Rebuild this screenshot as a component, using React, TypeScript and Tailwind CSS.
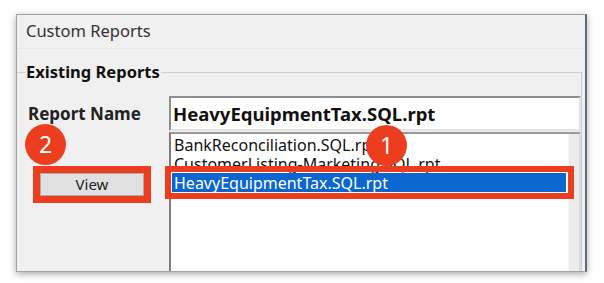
import { FC } from 'react';

const font = "font-['Segoe_UI','Noto_Sans','Open_Sans',sans-serif]";

// Numbered callout bubble laid over the dialog
const Callout: FC<{ n: string; className: string }> = ({ n, className }) => (
  <div
    className={`absolute w-[41px] h-[41px] rounded-full bg-[#ec3e1f] text-white text-[23px] leading-none flex items-center justify-center ${className}`}
  >
    {n}
  </div>
);

const reports = [
  'BankReconciliation.SQL.rpt',
  'CustomerListing-Marketing.SQL.rpt',
  'HeavyEquipmentTax.SQL.rpt',
];

export default function App() {
  const selected = 2;

  return (
    <div className={`w-[604px] h-[283px] bg-white overflow-hidden pt-[14px] pl-[16px] ${font}`}>
      {/* Dialog window */}
      <div className="relative w-[571px] h-[258px] bg-[#f0f0f0] border-t border-l border-b border-[#a3a3a3] border-r-2 border-r-[#5d6d80] shadow-[0_2px_7px_rgba(0,0,0,0.35)] flex flex-col">
        <div className="h-[34px] pl-[9px] flex items-center text-[16.5px] text-[#333] border-b border-[#e7e7e7]">
          Custom Reports
        </div>

        {/* Group box */}
        <fieldset className="mt-[15px] flex-1 min-h-0 border-t border-r border-[#cfcfcf] mr-[3px] flex">
          <legend className="ml-[8px] px-[1px] text-[16.5px] font-bold text-[#111] leading-[16px]">
            Existing Reports
          </legend>
          <div className="flex w-full h-full">
            <div className="w-[152px] shrink-0 flex flex-col">
              <div className="mt-[25px] pl-[11px] text-[17px] font-bold text-[#222] leading-[18px]">
                Report Name
              </div>
              <div className="mt-[50px] ml-[23px]">
                <button className="w-[104px] h-[23px] bg-[#e1e1e1] border border-[#adadad] text-[15px] text-[#222] flex items-center justify-center outline-[7px] outline-solid outline-[#ec3e1f]">
                  View
                </button>
              </div>
            </div>

            <div className="flex-1 flex flex-col">
              <div className="mt-[16px] h-[35px] bg-white border-2 border-t-[#8f8f8f] border-l-[#8f8f8f] border-b-[#e3e3e3] border-r-[#e3e3e3] flex items-center pl-[2px] text-[18.5px] font-bold text-[#111]">
                HeavyEquipmentTax.SQL.rpt
              </div>
              <div className="mt-[1px] flex-1 bg-white border-2 border-t-[#9a9a9a] border-l-[#7d7d7d] border-b-0 border-r-[#dadada] flex">
                <div className="flex-1 pt-[1px] pl-[1px]">
                  {reports.map((r, i) => (
                    <div
                      key={r}
                      className={`relative h-[19px] pl-[2px] flex items-center text-[16px] ${
                        i === selected ? 'bg-[#0b66cf] text-white mr-[2px]' : 'text-[#111]'
                      }`}
                    >
                      {r}
                      {i === selected && (
                        <div className="absolute -left-[7px] -right-[8px] -top-[7px] -bottom-[7px] border-[6px] border-[#ec3e1f]" />
                      )}
                    </div>
                  ))}
                </div>
                <div className="w-[11px] bg-[#ececec] border-l border-[#f8f8f8]" />
              </div>
            </div>
          </div>
        </fieldset>

        <Callout n="2" className="left-[8px] top-[109px]" />
        <Callout n="1" className="left-[349px] top-[110px]" />
      </div>
    </div>
  );
}
